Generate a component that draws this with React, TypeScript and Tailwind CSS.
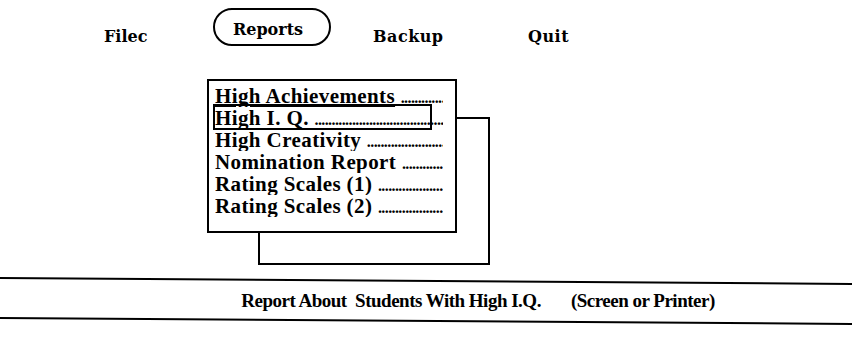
import React from 'react';

type Item = { label: string; underline?: boolean; selected?: boolean };

const items: Item[] = [
  { label: 'High Achievements', underline: true },
  { label: 'High I. Q.', selected: true },
  { label: 'High Creativity' },
  { label: 'Nomination Report' },
  { label: 'Rating Scales (1)' },
  { label: 'Rating Scales (2)' },
];

const dots = '.'.repeat(80);

const App: React.FC = () => {
  return (
    <div className="w-[852px] h-[339px] bg-white text-black overflow-hidden flex flex-col">
      {/* menu bar */}
      <nav className="flex items-start h-[60px] pt-[8px] pl-[104px] font-['DejaVu_Serif',serif] font-bold text-[16px]">
        <span className="mt-[17px] w-[109px]">Filec</span>
        <span className="w-[118px] h-[38px] rounded-full border-2 border-black flex justify-center pt-[12px] pr-[8px] leading-none">
          Reports
        </span>
        <span className="mt-[17px] ml-[42px] w-[155px] tracking-[0.5px]">Backup</span>
        <span className="mt-[17px] tracking-[0.5px]">Quit</span>
      </nav>

      {/* dropdown area */}
      <div className="relative h-[220px]">
        <div className="absolute left-[207px] top-[19px] w-[250px]">
          <div className="absolute left-[51px] top-[38px] w-[232px] h-[148px] border-2 border-black" />
          <div className="relative h-[154px] bg-white border-2 border-black pl-[6px] pt-[4px] font-['Liberation_Serif',serif] font-bold text-[21px] leading-[22px] tracking-[0.4px]">
            {items.map((it) => (
              <div key={it.label} className="relative w-[228px] h-[22px] whitespace-nowrap">
                <div className="overflow-hidden">
                  <span className={it.underline ? 'underline underline-offset-2' : ''}>{it.label}</span>{' '}
                  <span className="text-[16px] leading-none tracking-[-0.6px]">{dots}</span>
                </div>
                {it.selected && (
                  <div className="absolute left-[-2px] right-[11px] top-[-3px] bottom-[-1px] border-2 border-black" />
                )}
              </div>
            ))}
          </div>
        </div>
      </div>

      {/* status line */}
      <div className="h-[2px] bg-black rotate-[0.4deg]" />
      <div className="h-[38px] flex items-center justify-center pl-[104px] font-['Liberation_Serif',serif] font-bold text-[19px] tracking-[-0.5px]">
        <span>Report About&nbsp; Students With High I.Q.</span>
        <span className="ml-[30px]">(Screen or Printer)</span>
      </div>
      <div className="h-[2px] bg-black rotate-[0.4deg]" />
    </div>
  );
};

export default App;
